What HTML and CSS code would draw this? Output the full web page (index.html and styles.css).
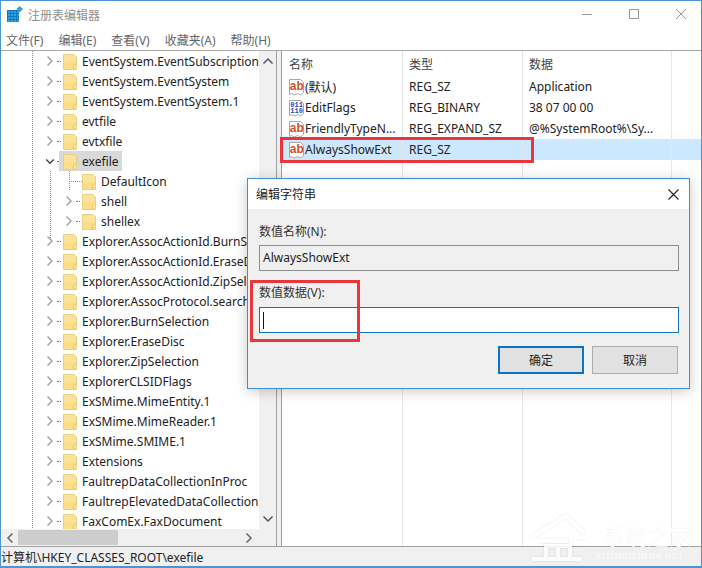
FILE: index.html
```html
<!DOCTYPE html>
<html lang="zh-CN">
<head>
<meta charset="utf-8">
<title>注册表编辑器</title>
<link rel="stylesheet" href="styles.css">
</head>
<body>
<svg class="defs" width="0" height="0" aria-hidden="true">
  <defs>
    <symbol id="folder" viewBox="0 0 14 17">
      <path d="M.5 1.500h10.500l2.500 2.500v12.500h-13z" fill="#fbe39c" stroke="#e9cf80"/>
      <path d="M1 9h12v7H1z" fill="#fdd978" opacity=".55"/>
      <path d="M10.500 16.500v-4l3-2" fill="#fff3c8" stroke="#e3c56e"/>
    </symbol>
    <symbol id="chev-r" viewBox="0 0 8 12"><path d="M1.500 1.500 6 6l-4.500 4.500" fill="none" stroke="#a6a6a6" stroke-width="1.500"/></symbol>
    <symbol id="ab" viewBox="0 0 17 18">
      <path d="M1.500 1.500h11l3 3v10l-3 2.500-3-1.500-3 1.500-3-1.500-2 1z" fill="#fff" stroke="#a7a7a7"/>
      <text x="1.800" y="11.500" class="ab-text">ab</text>
    </symbol>
    <symbol id="bin" viewBox="0 0 17 18">
      <path d="M1.500 1.500h11l3 3v10l-3 2.500-3-1.500-3 1.500-3-1.500-2 1z" fill="#fff" stroke="#a7a7a7"/>
      <text x="2.300" y="7.500" class="bin-text">011</text>
      <text x="2.300" y="13.500" class="bin-text">110</text>
    </symbol>
  </defs>
</svg>

<div class="window">
  <header class="titlebar">
    <svg class="app-icon" width="17" height="17" viewBox="0 0 17 17">
      <path d="M0 4h12v12H0z" fill="#27a3e6"/>
      <path d="M.5 4v12M3.500 4v12M6.500 4v12M9.500 4v12M0 4.500h12M0 7.500h12M0 10.500h12M0 13.500h12" stroke="#1277b6" stroke-width="1"/>
      <path d="M12.500 0 16 3l-3.500 3.500L9.500 3z" fill="#3a9fd8"/>
    </svg>
    <span class="title">注册表编辑器</span>
    <div class="caption-btns">
      <svg width="12" height="12" viewBox="0 0 12 12"><path d="M1 6.500h10" stroke="#999"/></svg>
      <svg width="12" height="12" viewBox="0 0 12 12"><path d="M1.500 1.500h9v9h-9z" fill="none" stroke="#999"/></svg>
      <svg width="12" height="12" viewBox="0 0 12 12"><path d="M1 1l10 10M11 1 1 11" stroke="#999"/></svg>
    </div>
  </header>

  <nav class="menubar">
    <span>文件(F)</span><span>编辑(E)</span><span>查看(V)</span><span>收藏夹(A)</span><span>帮助(H)</span>
  </nav>

  <main class="panes">
    <section class="tree-pane">
      <div class="tree-view">
        <div class="tree">
          <div class="row"><svg class="chev"><use href="#chev-r"/></svg><i class="dots"></i><svg class="fld"><use href="#folder"/></svg><span>EventSystem.EventSubscriptions</span></div>
          <div class="row"><svg class="chev"><use href="#chev-r"/></svg><i class="dots"></i><svg class="fld"><use href="#folder"/></svg><span>EventSystem.EventSystem</span></div>
          <div class="row"><svg class="chev"><use href="#chev-r"/></svg><i class="dots"></i><svg class="fld"><use href="#folder"/></svg><span>EventSystem.EventSystem.1</span></div>
          <div class="row"><svg class="chev"><use href="#chev-r"/></svg><i class="dots"></i><svg class="fld"><use href="#folder"/></svg><span>evtfile</span></div>
          <div class="row"><svg class="chev"><use href="#chev-r"/></svg><i class="dots"></i><svg class="fld"><use href="#folder"/></svg><span>evtxfile</span></div>
          <div class="row open"><svg class="chev" viewBox="0 0 12 8"><path d="M1.500 1.500 6 6l4.500-4.500" fill="none" stroke="#444" stroke-width="1.700"/></svg><i class="dots"></i><div class="sel"><svg class="fld"><use href="#folder"/></svg><span>exefile</span></div></div>
          <div class="children">
            <div class="row first"><i class="branch"></i><svg class="fld"><use href="#folder"/></svg><span>DefaultIcon</span></div>
            <div class="row"><svg class="chev"><use href="#chev-r"/></svg><i class="dots"></i><svg class="fld"><use href="#folder"/></svg><span>shell</span></div>
            <div class="row"><svg class="chev"><use href="#chev-r"/></svg><i class="dots"></i><svg class="fld"><use href="#folder"/></svg><span>shellex</span></div>
          </div>
          <div class="row"><svg class="chev"><use href="#chev-r"/></svg><i class="dots"></i><svg class="fld"><use href="#folder"/></svg><span>Explorer.AssocActionId.BurnSelection</span></div>
          <div class="row"><svg class="chev"><use href="#chev-r"/></svg><i class="dots"></i><svg class="fld"><use href="#folder"/></svg><span>Explorer.AssocActionId.EraseDisc</span></div>
          <div class="row"><svg class="chev"><use href="#chev-r"/></svg><i class="dots"></i><svg class="fld"><use href="#folder"/></svg><span>Explorer.AssocActionId.ZipSelection</span></div>
          <div class="row"><svg class="chev"><use href="#chev-r"/></svg><i class="dots"></i><svg class="fld"><use href="#folder"/></svg><span>Explorer.AssocProtocol.search-ms</span></div>
          <div class="row"><svg class="chev"><use href="#chev-r"/></svg><i class="dots"></i><svg class="fld"><use href="#folder"/></svg><span>Explorer.BurnSelection</span></div>
          <div class="row"><svg class="chev"><use href="#chev-r"/></svg><i class="dots"></i><svg class="fld"><use href="#folder"/></svg><span>Explorer.EraseDisc</span></div>
          <div class="row"><svg class="chev"><use href="#chev-r"/></svg><i class="dots"></i><svg class="fld"><use href="#folder"/></svg><span>Explorer.ZipSelection</span></div>
          <div class="row"><svg class="chev"><use href="#chev-r"/></svg><i class="dots"></i><svg class="fld"><use href="#folder"/></svg><span>ExplorerCLSIDFlags</span></div>
          <div class="row"><svg class="chev"><use href="#chev-r"/></svg><i class="dots"></i><svg class="fld"><use href="#folder"/></svg><span>ExSMime.MimeEntity.1</span></div>
          <div class="row"><svg class="chev"><use href="#chev-r"/></svg><i class="dots"></i><svg class="fld"><use href="#folder"/></svg><span>ExSMime.MimeReader.1</span></div>
          <div class="row"><svg class="chev"><use href="#chev-r"/></svg><i class="dots"></i><svg class="fld"><use href="#folder"/></svg><span>ExSMime.SMIME.1</span></div>
          <div class="row"><svg class="chev"><use href="#chev-r"/></svg><i class="dots"></i><svg class="fld"><use href="#folder"/></svg><span>Extensions</span></div>
          <div class="row"><svg class="chev"><use href="#chev-r"/></svg><i class="dots"></i><svg class="fld"><use href="#folder"/></svg><span>FaultrepDataCollectionInProc</span></div>
          <div class="row"><svg class="chev"><use href="#chev-r"/></svg><i class="dots"></i><svg class="fld"><use href="#folder"/></svg><span>FaultrepElevatedDataCollection</span></div>
          <div class="row"><svg class="chev"><use href="#chev-r"/></svg><i class="dots"></i><svg class="fld"><use href="#folder"/></svg><span>FaxComEx.FaxDocument</span></div>
        </div>
        <div class="vscroll">
          <svg width="12" height="8" viewBox="0 0 12 8"><path d="M1.500 6.500 6 2l4.500 4.500" fill="none" stroke="#555" stroke-width="1.500"/></svg>
          <svg width="12" height="8" viewBox="0 0 12 8"><path d="M1.500 1.500 6 6l4.500-4.500" fill="none" stroke="#555" stroke-width="1.500"/></svg>
        </div>
      </div>
      <div class="hscroll">
        <svg class="h-arrow" width="8" height="12" viewBox="0 0 8 12"><path d="M6.500 1.500 2 6l4.500 4.500" fill="none" stroke="#666" stroke-width="1.500"/></svg>
        <div class="thumb"></div>
        <svg class="h-arrow" width="8" height="12" viewBox="0 0 8 12"><path d="M1.500 1.500 6 6l-4.500 4.500" fill="none" stroke="#666" stroke-width="1.500"/></svg>
        <div class="corner"></div>
      </div>
    </section>

    <section class="list-pane">
      <div class="lrow head"><div>名称</div><div>类型</div><div>数据</div></div>
      <div class="lrow"><div class="name"><svg class="ricon"><use href="#ab"/></svg>(默认)</div><div>REG_SZ</div><div>Application</div></div>
      <div class="lrow"><div class="name"><svg class="ricon"><use href="#bin"/></svg>EditFlags</div><div>REG_BINARY</div><div>38 07 00 00</div></div>
      <div class="lrow"><div class="name"><svg class="ricon"><use href="#ab"/></svg>FriendlyTypeN...</div><div>REG_EXPAND_SZ</div><div>@%SystemRoot%\Sy...</div></div>
      <div class="lrow selected"><div class="name"><svg class="ricon"><use href="#ab"/></svg>AlwaysShowExt</div><div>REG_SZ</div><div></div></div>
      <div class="lrow filler"><div></div><div></div><div></div></div>
    </section>
  </main>

  <footer class="status">计算机\HKEY_CLASSES_ROOT\exefile</footer>
</div>

<div class="dialog">
  <div class="dlg-title"><span>编辑字符串</span>
    <svg width="13" height="13" viewBox="0 0 13 13"><path d="M1.500 1.500l10 10M11.500 1.500l-10 10" stroke="#222" stroke-width="1.100"/></svg>
  </div>
  <div class="dlg-body">
    <label class="lbl">数值名称(N):</label>
    <div class="input readonly">AlwaysShowExt</div>
    <label class="lbl second">数值数据(V):</label>
    <div class="input active"><i class="caret"></i></div>
    <div class="btns">
      <button class="btn primary">确定</button>
      <button class="btn">取消</button>
    </div>
  </div>
</div>

<div class="hl hl-list"></div>
<div class="hl hl-input"></div>

<div class="watermark">
  <svg class="wm-house" width="68" height="48" viewBox="0 0 68 48"><path d="M2 24 36 3l18 17M8 28h30M16 33h24v13H16zM28 33v13M2 46h50M44 30h14" fill="none" stroke="#fff" stroke-width="4"/></svg>
  <div class="wm-text"><b>系统之家</b><small>XITONGZHIJIA.NET</small></div>
</div>
</body>
</html>
```
FILE: styles.css
```css
* { box-sizing: border-box; }
html, body { margin: 0; padding: 0; }
body {
  position: relative;
  width: 702px;
  height: 568px;
  overflow: hidden;
  background: #fff;
  font-family: "Noto Sans", "Noto Sans CJK SC", sans-serif;
  font-size: 12px;
  color: #1e1e1e;
}
.defs { position: absolute; }
.ab-text { font: 700 12px "Liberation Sans", sans-serif; fill: #cc5228; }
.bin-text { font: 700 7px "Liberation Mono", monospace; fill: #2347ad; }

.window {
  width: 702px;
  height: 568px;
  display: flex;
  flex-direction: column;
  border: 1px solid #4d94d4;
  border-bottom-width: 2px;
  background: #f0f0f0;
}

.titlebar {
  height: 27px;
  flex: none;
  display: flex;
  align-items: center;
  padding-left: 6px;
  background: #fff;
}
.title { margin-left: 4px; font-size: 12px; color: #8f8f8f; }
.caption-btns { margin-left: auto; display: flex; gap: 35px; padding: 0 14px 2px 0; }

.menubar {
  height: 22px;
  flex: none;
  display: flex;
  align-items: center;
  gap: 15px;
  padding: 2px 0 0 5px;
  background: #fff;
  font-size: 12px;
  color: #666;
}

.panes {
  flex: 1;
  min-height: 0;
  display: flex;
  gap: 4px;
  border-top: 1px solid #a9a9a9;
  background: #f0f0f0;
}

.tree-pane {
  width: 276px;
  flex: none;
  display: flex;
  flex-direction: column;
  border-right: 1px solid #a0a0a0;
}
.tree-view { flex: 1; min-height: 0; display: flex; background: #fff; }
.tree {
  width: 258px;
  flex: none;
  overflow: hidden;
  background-image: linear-gradient(#8c8c8c 50%, transparent 50%);
  background-size: 1px 2px;
  background-repeat: repeat-y;
  background-position: 31px 0;
}
.row {
  height: 20px;
  display: flex;
  align-items: center;
  white-space: nowrap;
  padding-left: 45px;
  color: #222;
}
.chev { width: 8px; height: 12px; flex: none; }
.row.open .chev { width: 10px; height: 7px; margin: 0 -1px 0 -1px; }
.dots {
  width: 4px;
  height: 0;
  flex: none;
  margin: 0 2px 0 3px;
  border-top: 1px dotted #777;
}
.fld { width: 14px; height: 17px; flex: none; margin-right: 5px; }
.sel {
  display: flex;
  align-items: center;
  height: 20px;
  margin-left: -4px;
  padding: 0 3px 0 4px;
  background: #d9d9d9;
}
.children {
  margin: 0 0 -10px 49px;
  padding-bottom: 10px;
  background-image: linear-gradient(#8c8c8c 50%, transparent 50%);
  background-size: 1px 2px;
  background-repeat: repeat-y;
}
.children .row { padding-left: 15px; }
.children .row.first { padding-left: 19px; }
.branch {
  width: 13px;
  height: 20px;
  flex: none;
  background-image:
    linear-gradient(#8c8c8c 50%, transparent 50%),
    linear-gradient(90deg, #8c8c8c 50%, transparent 50%);
  background-size: 1px 2px, 2px 1px;
  background-repeat: repeat-y, repeat-x;
  background-position: 0 0, 0 10px;
}

.vscroll {
  width: 17px;
  flex: none;
  display: flex;
  flex-direction: column;
  justify-content: space-between;
  align-items: center;
  padding: 6px 0;
  background: #f0f0f0;
}
.hscroll {
  height: 17px;
  flex: none;
  display: flex;
  align-items: center;
  background: #f0f0f0;
  padding-left: 5px;
}
.thumb { width: 100px; height: 15px; margin: 0 127px 0 4px; background: #cdcdcd; }
.corner { width: 17px; margin-left: auto; }

.list-pane {
  flex: 1;
  min-width: 0;
  display: flex;
  flex-direction: column;
  background: #fff;
  border-left: 1px solid #a0a0a0;
}
.lrow {
  height: 21px;
  flex: none;
  display: grid;
  grid-template-columns: 121px 120px 149px;
  align-items: stretch;
  white-space: nowrap;
  color: #222;
}
.lrow > div {
  display: flex;
  align-items: center;
  padding-left: 6px;
  border-right: 1px solid #e6e6e6;
}
.lrow.head { height: 25px; color: #444; }
.lrow.head > div:first-child { padding-left: 7px; }
.ricon { width: 17px; height: 18px; flex: none; }
.lrow.selected { background: #cce8ff; }
.filler { flex: 1; }

.status {
  height: 20px;
  flex: none;
  display: flex;
  align-items: center;
  border-top: 1px solid #a0a0a0;
  background: #f0f0f0;
  color: #222;
}

.dialog {
  position: absolute;
  left: 247px;
  top: 178px;
  width: 443px;
  height: 211px;
  display: flex;
  flex-direction: column;
  border: 1px solid #3f8fce;
  background: #f0f0f0;
  box-shadow: 0 2px 12px rgba(0, 0, 0, .22);
}
.dlg-title {
  height: 30px;
  flex: none;
  display: flex;
  align-items: center;
  justify-content: space-between;
  padding: 0 9px 0 8px;
  background: #fff;
  font-size: 12px;
  color: #222;
}
.dlg-body { flex: 1; display: flex; flex-direction: column; padding: 13px 10px 0 11px; }
.lbl { height: 18px; display: flex; align-items: center; color: #333; margin-bottom: 5px; }
.lbl.second { margin-top: 12px; margin-bottom: 6px; }
.input {
  height: 26px;
  display: flex;
  align-items: center;
  padding: 0 0 2px 3px;
  border: 1px solid #7f7f7f;
}
.input.readonly { background: #f0f0f0; border-color: #8e8e8e; }
.input.active { background: #fff; border-color: #0e72bd; padding-bottom: 0; }
.caret { width: 1px; height: 17px; background: #111; }
.btns { display: flex; justify-content: flex-end; gap: 8px; margin-top: 13px; padding-right: 1px; }
.btn {
  width: 86px;
  height: 28px;
  padding: 0;
  border: 1px solid #adadad;
  background: #e1e1e1;
  font: inherit;
  color: #222;
}
.btn.primary { border: 2px solid #0b74c8; }

.hl { position: absolute; border: 3px solid #e8363c; }
.hl-list { left: 280px; top: 137px; width: 254px; height: 26px; }
.hl-input { left: 250px; top: 280px; width: 110px; height: 62px; }

.watermark {
  position: absolute;
  left: 530px;
  top: 513px;
  display: flex;
  width: 172px;
  opacity: .85;
}
.wm-house { flex: none; filter: drop-shadow(0 0 1px rgba(0, 0, 0, .12)); }
.wm-text { margin: 10px 0 0 -3px; display: flex; flex-direction: column; color: #fff; white-space: nowrap; }
.wm-text b { padding-left: 8px; font-size: 22px; font-weight: 400; line-height: 26px; text-shadow: 0 0 1px rgba(0, 0, 0, .15); }
.wm-text small { margin-top: 1px; font: 9px/12px "Liberation Serif", serif; letter-spacing: .4px; }
```
